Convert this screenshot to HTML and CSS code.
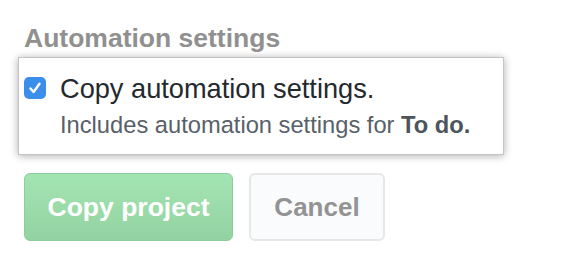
FILE: index.html
```html
<!DOCTYPE html>
<html>
<head>
<meta charset="utf-8">
<link rel="stylesheet" href="styles.css">
</head>
<body>
<div class="page">
  <h2 class="heading">Automation settings</h2>
  <div class="box">
    <span class="check">
      <svg width="22" height="22" viewBox="0 0 22 22"><rect x="0" y="0" width="22" height="22" rx="5" fill="#3b8eea"/><path d="M6.5 11.5 L9.6 15 L15.5 6.8" fill="none" stroke="#fff" stroke-width="2.4" stroke-linecap="round" stroke-linejoin="round"/></svg>
    </span>
    <div class="texts">
      <div class="title">Copy automation settings.</div>
      <div class="note">Includes automation settings for <b>To do.</b></div>
    </div>
  </div>
  <div class="actions">
    <button class="btn btn-primary">Copy project</button>
    <button class="btn btn-cancel">Cancel</button>
  </div>
</div>
</body>
</html>
```
FILE: styles.css
```css
html, body { margin: 0; padding: 0; background: #fff; }
body { font-family: "Liberation Sans", Arial, sans-serif; }
.page { padding: 23px 0 0 18px; width: 486px; }
.heading {
  margin: 0 0 4px 6px;
  font-size: 26.5px;
  line-height: 30px;
  font-weight: bold;
  color: #909090;
}
.box {
  display: flex;
  align-items: flex-start;
  border: 1px solid #c4c4c4;
  background: #fff;
  box-shadow: 0 1px 8px rgba(0,0,0,0.32);
  padding: 15px 10px 15px 5px;
  height: 66px;
}
.check { display: block; width: 22px; height: 22px; margin-top: 4px; }
.check svg { display: block; }
.texts { margin-left: 14px; }
.title {
  font-size: 27.2px;
  line-height: 32px;
  color: #24292e;
}
.note {
  margin-top: 6px;
  font-size: 23.7px;
  line-height: 28px;
  color: #586069;
}
.note b { font-weight: bold; color: #4c545c; }
.actions { display: flex; gap: 16px; margin: 18px 0 0 6px; }
.btn {
  font-family: "Liberation Sans", Arial, sans-serif;
  font-weight: bold;
  height: 68px;
  border-radius: 6px;
  padding: 0;
  font-size: 26px;
}
.btn-primary {
  width: 209px;
  color: #fff;
  background: linear-gradient(#a3e5b2, #93d2a2);
  border: 1px solid #8fcc9d;
  font-size: 26.5px;
}
.btn-cancel {
  width: 136px;
  color: #939393;
  background: #fafbfc;
  border: 2px solid #e6e7e9;
}
```
